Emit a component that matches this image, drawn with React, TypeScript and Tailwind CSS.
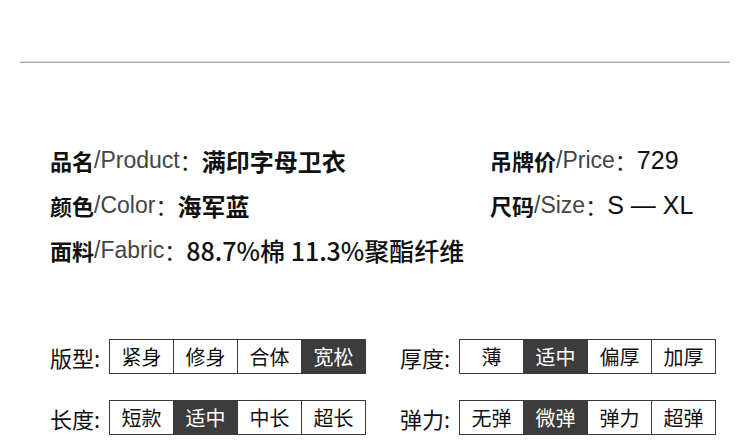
import React from "react";

const cjk = "font-['Noto_Sans_CJK_SC','Liberation_Sans',sans-serif]";
const lat = "font-['Liberation_Sans','Noto_Sans_CJK_SC',sans-serif]";

function Info({ label, en, value, valueClass }: { label: string; en: string; value: string; valueClass: string }) {
  return (
    <div className="flex items-center h-[45px] whitespace-nowrap">
      <span className={"text-[22px] font-bold text-[#111] " + cjk}>{label}</span>
      <span className={"text-[23px] text-[#444] " + lat}>/{en}</span>
      <span className={"text-[22px] text-[#222] " + cjk}>：</span>
      <span className={valueClass}>{value}</span>
    </div>
  );
}

function Scale({ label, items, active }: { label: string; items: string[]; active: number }) {
  return (
    <div className="flex items-center">
      <span className={"w-[59px] text-[22px] text-[#111] leading-none " + cjk}>{label}</span>
      <div className="flex border-l border-t border-b border-[#3a3a3a]">
        {items.map((t, i) => (
          <div
            key={i}
            className={
              "w-[64px] h-[33px] flex items-center justify-center border-r border-[#3a3a3a] text-[20px] leading-none " +
              cjk +
              (i === active ? " bg-[#3c3c3c] text-white" : " bg-white text-[#111]")
            }
          >
            {t}
          </div>
        ))}
      </div>
    </div>
  );
}

const cjkBold = "text-[24px] font-bold text-[#111] " + cjk;
const latVal = "text-[25px] text-[#111] " + lat;

export default function App() {
  return (
    <div className="w-[750px] h-[445px] bg-white overflow-hidden">
      <div className="mt-[61px] mx-[20px]">
        <div className="h-px bg-[#dedede]" />
        <div className="h-px bg-[#a9a9a9]" />
      </div>
      <div className="pt-[75px] pl-[50px] grid grid-cols-[440px_1fr]">
        <div className="flex flex-col">
          <Info label="品名" en="Product" value="满印字母卫衣" valueClass={cjkBold} />
          <Info label="颜色" en="Color" value="海军蓝" valueClass={cjkBold} />
          <Info
            label="面料"
            en="Fabric"
            value="88.7%棉 11.3%聚酯纤维"
            valueClass={"text-[25px] font-medium text-[#111] " + cjk}
          />
        </div>
        <div className="flex flex-col">
          <Info label="吊牌价" en="Price" value="729" valueClass={latVal} />
          <Info label="尺码" en="Size" value="S — XL" valueClass={latVal} />
        </div>
      </div>
      <div className="mt-[66px] pl-[50px] grid grid-cols-[350px_1fr] gap-y-[26px]">
        <Scale label="版型:" items={["紧身", "修身", "合体", "宽松"]} active={3} />
        <Scale label="厚度:" items={["薄", "适中", "偏厚", "加厚"]} active={1} />
        <Scale label="长度:" items={["短款", "适中", "中长", "超长"]} active={1} />
        <Scale label="弹力:" items={["无弹", "微弹", "弹力", "超弹"]} active={1} />
      </div>
    </div>
  );
}
